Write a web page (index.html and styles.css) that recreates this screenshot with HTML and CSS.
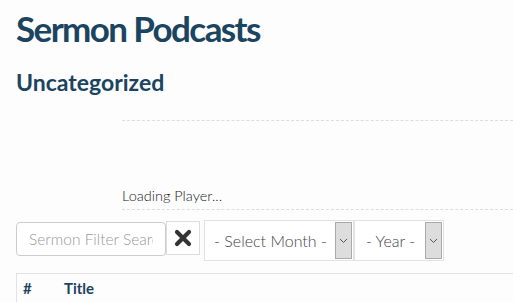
FILE: index.html
```html
<!DOCTYPE html>
<html lang="en">
<head>
    <meta charset="UTF-8">
    <meta name="viewport" content="width=device-width, initial-scale=1.0">
    <title>Sermon Podcasts</title>
    <link rel="stylesheet" href="styles.css">
</head>
<body>
    <div class="page">
        <h1 class="page-title">Sermon Podcasts</h1>
        <h2 class="cat-title">Uncategorized</h2>

        <div class="player">
            <div class="player-screen"></div>
            <div class="player-status">Loading Player...</div>
        </div>

        <div class="filters">
            <input type="text" class="search" placeholder="Sermon Filter Search">
            <button class="clear" type="button">
                <svg width="20" height="20" viewBox="0 0 20 20">
                    <path d="M4 4 L16 16 M16 4 L4 16" stroke="#333" stroke-width="4.2" stroke-linecap="round"/>
                </svg>
            </button>
            <div class="select month">
                <span class="select-text">- Select Month -</span>
                <span class="select-arrow">
                    <svg width="9" height="6" viewBox="0 0 9 6"><path d="M1 1 L4.5 4.5 L8 1" fill="none" stroke="#555" stroke-width="1"/></svg>
                </span>
            </div>
            <div class="select year">
                <span class="select-text">- Year -</span>
                <span class="select-arrow">
                    <svg width="9" height="6" viewBox="0 0 9 6"><path d="M1 1 L4.5 4.5 L8 1" fill="none" stroke="#555" stroke-width="1"/></svg>
                </span>
            </div>
        </div>

        <table class="sermons">
            <thead>
                <tr>
                    <th class="num">#</th>
                    <th>Title</th>
                </tr>
            </thead>
        </table>
    </div>
</body>
</html>
```

FILE: styles.css
```css
body, html {
    margin: 0;
    padding: 0;
    background-color: #fdfdfd;
    font-family: Lato, "Open Sans", sans-serif;
    overflow: hidden;
}

.page {
    padding: 0 0 0 16px;
}

.page-title {
    margin: 0;
    padding-top: 4px;
    font-size: 35px;
    font-weight: bold;
    letter-spacing: -1.6px;
    line-height: 48px;
    color: #1b4460;
}

.cat-title {
    margin: 15px 0 0 0;
    font-size: 23px;
    font-weight: bold;
    line-height: 30px;
    color: #1b4460;
}

.player {
    margin: 23px 0 0 106px;
}

.player-screen {
    height: 65px;
    border-top: 1px dashed #ddd;
}

.player-status {
    height: 23px;
    font-size: 14.5px;
    font-weight: 300;
    line-height: 20px;
    color: #222;
    border-bottom: 1px dashed #ddd;
}

.filters {
    display: flex;
    align-items: flex-start;
    margin-top: 10px;
}

.search {
    box-sizing: border-box;
    width: 150px;
    height: 34px;
    margin-top: 2px;
    padding: 0 12px;
    border: 1px solid #ccc;
    border-radius: 4px;
    font-family: Lato, sans-serif;
    font-size: 15.5px;
    font-weight: 300;
    color: #555;
    background: #fff;
}

.search::placeholder {
    color: #999;
}

.clear {
    box-sizing: border-box;
    width: 34px;
    height: 34px;
    margin-top: 1px;
    padding: 0;
    border: 1px solid #ddd;
    background: #fff;
    display: flex;
    align-items: center;
    justify-content: center;
}

.select {
    box-sizing: border-box;
    display: flex;
    align-items: center;
    height: 41px;
    padding: 1px;
    border: 1px solid #e2e2e2;
    background: #fff;
}

.month {
    width: 150px;
    margin-left: 4px;
}

.year {
    width: 90px;
}

.select-text {
    flex: 1;
    text-align: center;
    font-size: 16px;
    font-weight: 300;
    color: #444;
}

.select-arrow {
    box-sizing: border-box;
    width: 17px;
    height: 37px;
    border: 1px solid #aaa;
    background: #ddd;
    display: flex;
    align-items: center;
    justify-content: center;
}

.sermons {
    width: 100%;
    margin-top: 12px;
    border-collapse: collapse;
    border-top: 1px solid #e2e2e2;
    border-left: 1px solid #e2e2e2;
}

.sermons th {
    text-align: left;
    padding: 5px 6px 6px;
    font-size: 15px;
    font-weight: bold;
    color: #1b4460;
}

.sermons th.num {
    width: 29px;
}
```
